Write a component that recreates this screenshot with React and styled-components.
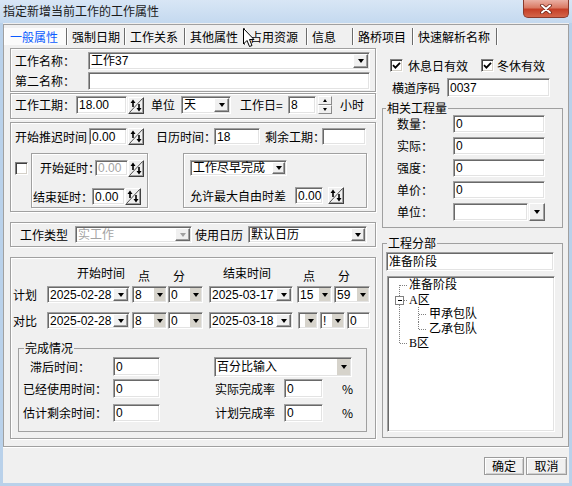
import React from "react";
import styled, { createGlobalStyle } from "styled-components";

const GlobalStyle = createGlobalStyle`
  html, body { margin: 0; padding: 0; background: #f0f0f0; }
  body {
    font-family: "Liberation Sans", "Noto Sans CJK SC", sans-serif;
    font-size: 12px;
    color: #000;
  }
  *, *::before, *::after { box-sizing: border-box; }
`;

const CJK = `"Noto Sans CJK SC", "Liberation Sans", sans-serif`;

const Window = styled.div`
  width: 572px;
  height: 486px;
  display: flex;
  flex-direction: column;
  background: #f0f0f0;
  overflow: hidden;
`;

const TitleBar = styled.div`
  height: 23px;
  flex: none;
  display: flex;
  align-items: flex-start;
  background: linear-gradient(to bottom, #d8e6f5 0%, #c4d9ef 100%);
`;

const Caption = styled.div`
  padding: 3px 0 0 3px;
  line-height: 16px;
  font-family: ${CJK};
  color: #1a1a1a;
`;

const CloseButton = styled.div`
  margin-left: auto;
  margin-right: 3px;
  width: 46px;
  height: 18px;
  border: 1px solid #8a3a2c;
  border-top: 0;
  border-radius: 0 0 5px 5px;
  background: linear-gradient(to bottom, #eab0a4 0%, #da7a64 45%, #c53f27 55%, #d4654a 100%);
  display: flex;
  align-items: center;
  justify-content: center;
`;

const Body = styled.div`
  flex: 1;
  display: flex;
  flex-direction: column;
  border: 3px solid #b9d1ea;
  border-top: 0;
  padding-top: 1px;
`;

const TabFrame = styled.div`
  height: 423px;
  flex: none;
  border: 1px solid #a0a0a0;
  display: flex;
  flex-direction: column;
  position: relative;
`;

const TabStrip = styled.div`
  height: 23px;
  flex: none;
  display: flex;
  align-items: center;
`;

const Tab = styled.div`
  width: ${(p) => p.$w}px;
  height: 17px;
  line-height: 17px;
  padding-left: 5px;
  flex: none;
  font-family: ${CJK};
  white-space: nowrap;
  border-right: 1px solid #6b6b6b;
  box-shadow: 1px 0 0 #fff;
  color: ${(p) => (p.$active ? "#0b5bff" : "#000")};
  background: ${(p) => (p.$active ? "#fbfbfb" : "transparent")};
  border-left: ${(p) => (p.$active ? "1px solid #fff" : "0")};
`;

const Cursor = styled.svg`
  position: absolute;
  left: 239px;
  top: 3px;
`;

const Page = styled.div`
  flex: 1;
  display: flex;
  padding-left: 6px;
`;

const LeftCol = styled.div`
  width: 366px;
  flex: none;
  display: flex;
  flex-direction: column;
`;

const RightCol = styled.div`
  width: 181px;
  margin-left: 6px;
  flex: none;
  display: flex;
  flex-direction: column;
`;

const Bevel = styled.div`
  flex: none;
  height: ${(p) => p.$h}px;
  width: ${(p) => (p.$w ? `${p.$w}px` : "auto")};
  margin-top: ${(p) => p.$mt || 0}px;
  margin-left: ${(p) => p.$ml || 0}px;
  padding: ${(p) => p.$pad || "0"};
  border: 1px solid #a0a0a0;
  box-shadow: inset 1px 1px #fff, 1px 1px #fff;
  display: flex;
  flex-direction: column;
`;

const Row = styled.div`
  flex: none;
  display: flex;
  align-items: center;
  height: ${(p) => p.$h || 18}px;
  margin-top: ${(p) => p.$mt || 0}px;
  padding-left: ${(p) => p.$pl || 0}px;
`;

const HeadRow = styled(Row)`
  align-items: flex-start;
`;

const Split = styled.div`
  flex: none;
  display: flex;
  align-items: flex-start;
  margin-top: 8px;
`;

const Label = styled.span`
  flex: none;
  width: ${(p) => (p.$w ? `${p.$w}px` : "auto")};
  margin-left: ${(p) => p.$ml || 0}px;
  padding-top: ${(p) => p.$dy || 0}px;
  line-height: 14px;
  white-space: nowrap;
  font-family: ${CJK};
`;

const Field = styled.div`
  flex: none;
  width: ${(p) => p.$w}px;
  height: ${(p) => p.$h || 18}px;
  margin-left: ${(p) => p.$ml || 0}px;
  margin-top: ${(p) => p.$mt || 0}px;
  display: flex;
  align-items: center;
  padding-left: 2px;
  overflow: hidden;
  white-space: nowrap;
  line-height: 14px;
  background: #fff;
  color: ${(p) => (p.$disabled ? "#a3a3a3" : "#000")};
  border: 1px solid;
  border-color: #a0a0a0 #fff #fff #a0a0a0;
  box-shadow: inset 1px 1px #696969, inset -1px -1px #e3e3e3;
`;

const FieldText = styled.span`
  flex: 1;
  overflow: hidden;
`;

const ArrowBtn = styled.div`
  flex: none;
  align-self: stretch;
  width: ${(p) => p.$w || 15}px;
  margin: 1px 1px 1px auto;
  display: flex;
  align-items: center;
  justify-content: center;
  background: ${(p) => (p.$tone === "tan" ? "#d6d3cb" : "#f0f0f0")};
  ${(p) =>
    p.$tone === "tan"
      ? ""
      : "border: 1px solid; border-color: #fff #696969 #696969 #fff; box-shadow: inset -1px -1px #a0a0a0;"}

  &::after {
    content: "";
    border-left: 3.5px solid transparent;
    border-right: 3.5px solid transparent;
    border-top: 4px solid ${(p) => (p.$tone === "disabled" ? "#a0a0a0" : "#000")};
  }
`;

const DropButton = styled(ArrowBtn)`
  align-self: auto;
  height: 18px;
  margin: 0 0 0 1px;
`;

const SpinBox = styled.div`
  flex: none;
  width: 16px;
  height: 17px;
  margin-left: ${(p) => (p.$ml === undefined ? 1 : p.$ml)}px;
  background: #f0f0f0;
  border: 1px solid;
  border-color: #fff #404040 #404040 #fff;
  box-shadow: inset -1px -1px #a0a0a0;
  display: flex;
`;

const UpDownWrap = styled.div`
  flex: none;
  width: 14px;
  height: 18px;
  margin-left: 2px;
  display: flex;
  flex-direction: column;
`;

const UpDownHalf = styled.div`
  flex: 1;
  background: #f0f0f0;
  border: 1px solid;
  border-color: #fff #8a8a8a #8a8a8a #fff;
  display: flex;
  align-items: center;
  justify-content: center;

  &::after {
    content: "";
    border-left: 2.5px solid transparent;
    border-right: 2.5px solid transparent;
    ${(p) => (p.$up ? "border-bottom: 3px solid #000;" : "border-top: 3px solid #000;")}
  }
`;

const CheckBox = styled.div`
  flex: none;
  width: 13px;
  height: 13px;
  margin-left: ${(p) => p.$ml || 0}px;
  margin-top: ${(p) => p.$mt || 0}px;
  background: #fff;
  border: 1px solid;
  border-color: #808080 #fff #fff #808080;
  box-shadow: inset 1px 1px #404040, inset -1px -1px #d4d0c8;
  display: flex;
  align-items: center;
  justify-content: center;
`;

const Group = styled.fieldset`
  flex: none;
  margin: ${(p) => p.$mt || 0}px 0 0 ${(p) => p.$ml || 0}px;
  padding: 0;
  min-width: 0;
  width: ${(p) => p.$w}px;
  height: ${(p) => p.$h}px;
  border: 1px solid #a0a0a0;
  display: flex;
  flex-direction: column;
`;

const GroupTitle = styled.legend`
  margin-left: ${(p) => (p.$ml === undefined ? 3 : p.$ml)}px;
  padding: 0 1px;
  line-height: 14px;
  font-family: ${CJK};
`;

const Tree = styled.div`
  flex: none;
  width: 168px;
  height: 156px;
  margin: 5px 0 0 4px;
  padding: 1px 0 0 1px;
  background: #fff;
  border: 1px solid;
  border-color: #a0a0a0 #fff #fff #a0a0a0;
  box-shadow: inset 1px 1px #696969, inset -1px -1px #e3e3e3;
  display: flex;
  flex-direction: column;
`;

const TreeRow = styled.div`
  flex: none;
  height: 14.5px;
  display: flex;
  align-items: center;
  line-height: 14px;
  font-family: "Liberation Serif", "Noto Sans CJK SC", serif;
`;

const Footer = styled.div`
  flex: 1;
  display: flex;
  justify-content: flex-end;
  align-items: flex-start;
  gap: 2px;
  padding: 10px 2px 0 0;
  box-shadow: inset 0 1px #fff;
`;

const Button = styled.div`
  width: ${(p) => p.$w}px;
  height: 18px;
  display: flex;
  align-items: center;
  justify-content: center;
  line-height: 14px;
  font-family: ${CJK};
  background: #f0f0f0;
  border: 1px solid #9c9c9c;
  box-shadow: inset 1px 1px #fff, inset -1px -1px #cfcfcf;
`;

const Combo = ({ w, h = 18, ml, text, tone = "raised", arrowW, disabled }) => (
  <Field $w={w} $h={h} $ml={ml} $disabled={disabled}>
    <FieldText>{text}</FieldText>
    <ArrowBtn $tone={disabled ? "disabled" : tone} $w={arrowW} />
  </Field>
);

const ArrowSpin = ({ ml }) => (
  <SpinBox $ml={ml}>
    <svg width="14" height="15" viewBox="0 0 14 15">
      <path d="M13.5 0.5 L0.5 14.5" stroke="#505050" strokeWidth="1" />
      <path d="M4 4v5" stroke="#000" strokeWidth="1.6" />
      <path d="M1.5 5 L4 1.5 L6.5 5 Z" fill="#000" />
      <path d="M10 6v5" stroke="#000" strokeWidth="1.6" />
      <path d="M7.5 10 L10 13.5 L12.5 10 Z" fill="#000" />
    </svg>
  </SpinBox>
);

const UpDown = () => (
  <UpDownWrap>
    <UpDownHalf $up />
    <UpDownHalf />
  </UpDownWrap>
);

const Check = ({ checked, ml, mt }) => (
  <CheckBox $ml={ml} $mt={mt}>
    {checked && (
      <svg width="9" height="9" viewBox="0 0 9 9">
        <path d="M1 4.2 L3.4 6.6 L8 1.8" stroke="#000" strokeWidth="1.8" fill="none" />
      </svg>
    )}
  </CheckBox>
);

const RH = 14.5;

const TreeGuide = ({ level, v0, v1, box }) => {
  const w = level === 0 ? 20 : 40;
  const c = RH / 2;
  const seg = (x, kind) => (
    <line x1={x} x2={x} y1={kind === "bottom" ? c : 0} y2={kind === "top" ? c : RH} />
  );
  const hx = level === 0 ? 10.5 : 29.5;
  return (
    <svg width={w} height={RH} viewBox={`0 0 ${w} ${RH}`}>
      <g stroke="#808080" strokeDasharray="1 1" shapeRendering="crispEdges">
        {v0 && seg(10.5, v0)}
        {v1 && seg(29.5, v1)}
        <line x1={hx} x2={hx + 8} y1={c} y2={c} />
      </g>
      {box && (
        <g shapeRendering="crispEdges">
          <rect x="6.5" y={c - 4} width="8" height="8" fill="#fff" stroke="#808080" />
          <line x1="8.5" x2="12.5" y1={c} y2={c} stroke="#000" />
        </g>
      )}
    </svg>
  );
};

const tabs = [
  { label: "一般属性", w: 63, active: true },
  { label: "强制日期", w: 58 },
  { label: "工作关系", w: 60 },
  { label: "其他属性", w: 60 },
  { label: "占用资源", w: 62 },
  { label: "信息", w: 46 },
  { label: "路桥项目", w: 60 },
  { label: "快速解析名称", w: 84 },
];

const quantities = ["数量：", "实际：", "强度：", "单价："];

const treeRows = [
  { text: "准备阶段", level: 0, v0: "bottom" },
  { text: "A区", level: 0, v0: "full", box: true },
  { text: "甲承包队", level: 1, v0: "full", v1: "full" },
  { text: "乙承包队", level: 1, v0: "full", v1: "top" },
  { text: "B区", level: 0, v0: "top" },
];

export default function App() {
  return (
    <>
      <GlobalStyle />
      <Window>
        <TitleBar>
          <Caption>指定新增当前工作的工作属性</Caption>
          <CloseButton>
            <svg width="12" height="10" viewBox="0 0 12 10">
              <path d="M2 1.5 L10 8.5 M10 1.5 L2 8.5" stroke="#6a2115" strokeWidth="3.6" strokeLinecap="round" />
              <path d="M2 1.5 L10 8.5 M10 1.5 L2 8.5" stroke="#fff" strokeWidth="2" strokeLinecap="round" />
            </svg>
          </CloseButton>
        </TitleBar>

        <Body>
          <TabFrame>
            <TabStrip>
              {tabs.map((t) => (
                <Tab key={t.label} $w={t.w} $active={t.active}>
                  {t.label}
                </Tab>
              ))}
            </TabStrip>
            <Cursor width="12" height="20" viewBox="0 0 12 20">
              <path
                d="M0.5 0.5 L0.5 16 L4 12.5 L6.5 18.5 L9 17.5 L6.5 11.5 L11 11.5 Z"
                fill="#fff"
                stroke="#000"
                strokeWidth="1"
                strokeLinejoin="miter"
              />
            </Cursor>

            <Page>
              <LeftCol>
                <Bevel $h={44} $pad="3px 4px 0 4px">
                  <Row>
                    <Label $w={73}>工作名称：</Label>
                    <Combo w={282} text="工作37" />
                  </Row>
                  <Row $mt={2}>
                    <Label $w={73}>第二名称：</Label>
                    <Field $w={282} />
                  </Row>
                </Bevel>

                <Bevel $h={26} $mt={1} $pad="2px 0 0 4px">
                  <Row>
                    <Label $w={61}>工作工期：</Label>
                    <Field $w={51}>18.00</Field>
                    <ArrowSpin />
                    <Label $w={30} $ml={7}>单位</Label>
                    <Combo w={50} text="天" />
                    <Label $w={48} $ml={9}>工作日=</Label>
                    <Field $w={28}>8</Field>
                    <UpDown />
                    <Label $ml={8}>小时</Label>
                  </Row>
                </Bevel>

                <Bevel $h={90} $mt={3} $pad="5px 0 0 4px">
                  <Row $h={17}>
                    <Label $w={74}>开始推迟时间</Label>
                    <Field $w={38} $h={17}>0.00</Field>
                    <ArrowSpin />
                    <Label $w={58} $ml={12}>日历时间：</Label>
                    <Field $w={46} $h={17}>18</Field>
                    <Label $w={57} $ml={5}>剩余工期：</Label>
                    <Field $w={44} $h={17} />
                  </Row>
                  <Split>
                    <Check mt={9} />
                    <Bevel $w={117} $h={55} $ml={3} $pad="6px 0 0 0">
                      <Row $h={16} $pl={8}>
                        <Label $w={55}>开始延时：</Label>
                        <Field $w={33} $h={16} $disabled>0.00</Field>
                        <ArrowSpin ml={0} />
                      </Row>
                      <Row $h={17} $mt={12} $pl={1}>
                        <Label $w={59}>结束延时：</Label>
                        <Field $w={33} $h={17}>0.00</Field>
                        <ArrowSpin ml={0} />
                      </Row>
                    </Bevel>
                    <Bevel $w={184} $h={55} $ml={35} $pad="6px 0 0 6px">
                      <Row $h={16}>
                        <Combo w={97} h={16} arrowW={13} text="工作尽早完成" />
                      </Row>
                      <Row $h={17} $mt={11}>
                        <Label $w={105}>允许最大自由时差</Label>
                        <Field $w={28} $h={17}>0.00</Field>
                        <ArrowSpin ml={5} />
                      </Row>
                    </Bevel>
                  </Split>
                </Bevel>

                <Bevel $h={25} $mt={10} $pad="3px 0 0 9px">
                  <Row $h={17}>
                    <Label $w={55}>工作类型</Label>
                    <Combo w={117} h={17} text="实工作" disabled />
                    <Label $w={53} $ml={3}>使用日历</Label>
                    <Combo w={119} h={17} arrowW={14} text="默认日历" />
                  </Row>
                </Bevel>

                <Bevel $h={182} $mt={10} $pad="8px 0 0 0">
                  <HeadRow $h={14}>
                    <Label $ml={66} $w={48}>开始时间</Label>
                    <Label $ml={13} $w={12} $dy={3}>点</Label>
                    <Label $ml={23} $w={12} $dy={3}>分</Label>
                    <Label $ml={38} $w={48}>结束时间</Label>
                    <Label $ml={32} $w={12} $dy={3}>点</Label>
                    <Label $ml={23} $w={12} $dy={3}>分</Label>
                  </HeadRow>
                  <Row $h={17} $mt={6}>
                    <Label $w={34} $ml={2}>计划</Label>
                    <Combo w={83} h={17} text="2025-02-28" />
                    <Combo w={35} h={17} ml={2} text="8" tone="tan" arrowW={11} />
                    <Combo w={35} h={17} ml={1} text="0" tone="tan" arrowW={11} />
                    <Combo w={84} h={17} ml={6} text="2025-03-17" />
                    <Combo w={35} h={17} ml={4} text="15" tone="tan" arrowW={11} />
                    <Combo w={36} h={17} ml={2} text="59" tone="tan" arrowW={11} />
                  </Row>
                  <Row $h={17} $mt={9}>
                    <Label $w={34} $ml={2}>对比</Label>
                    <Combo w={83} h={17} text="2025-02-28" />
                    <Combo w={35} h={17} ml={2} text="8" tone="tan" arrowW={11} />
                    <Combo w={35} h={17} ml={1} text="0" tone="tan" arrowW={11} />
                    <Combo w={84} h={17} ml={6} text="2025-03-18" />
                    <Combo w={20} h={17} ml={5} text="" tone="tan" arrowW={11} />
                    <Combo w={25} h={17} ml={2} text="!" tone="tan" arrowW={11} />
                    <Field $w={23} $h={17} $ml={2}>0</Field>
                  </Row>

                  <Group $w={349} $h={91} $mt={12} $ml={7}>
                    <GroupTitle $ml={5}>完成情况</GroupTitle>
                    <Row $h={19} $mt={2} $pl={11}>
                      <Label $w={83}>滞后时间：</Label>
                      <Field $w={47} $h={19}>0</Field>
                      <Combo w={138} h={20} ml={54} text="百分比输入" tone="tan" arrowW={13} />
                    </Row>
                    <Row $h={19} $mt={3} $pl={4}>
                      <Label $w={90}>已经使用时间：</Label>
                      <Field $w={47} $h={19}>0</Field>
                      <Label $w={69} $ml={55}>实际完成率</Label>
                      <Field $w={39} $h={19}>0</Field>
                      <Label $ml={19}>%</Label>
                    </Row>
                    <Row $h={18} $mt={6} $pl={4}>
                      <Label $w={90}>估计剩余时间：</Label>
                      <Field $w={47} $h={18}>0</Field>
                      <Label $w={69} $ml={55}>计划完成率</Label>
                      <Field $w={39} $h={18}>0</Field>
                      <Label $ml={19}>%</Label>
                    </Row>
                  </Group>
                </Bevel>
              </LeftCol>

              <RightCol>
                <Row $h={13} $mt={11}>
                  <Check ml={8} checked />
                  <Label $ml={5} $w={60}>休息日有效</Label>
                  <Check ml={13} checked />
                  <Label $ml={3}>冬休有效</Label>
                </Row>
                <Row $h={19} $mt={6}>
                  <Label $ml={10} $w={55}>横道序码</Label>
                  <Field $w={103} $h={19}>0037</Field>
                </Row>

                <Group $w={181} $h={127} $mt={4}>
                  <GroupTitle>相关工程量</GroupTitle>
                  {quantities.map((q, i) => (
                    <Row key={q} $mt={i === 0 ? 0 : 4} $pl={14}>
                      <Label $w={56}>{q}</Label>
                      <Field $w={92}>0</Field>
                    </Row>
                  ))}
                  <Row $mt={4} $pl={14}>
                    <Label $w={56}>单位：</Label>
                    <Field $w={75} />
                    <DropButton $w={16} />
                  </Row>
                </Group>

                <Group $w={181} $h={202} $mt={8}>
                  <GroupTitle $ml={4}>工程分部</GroupTitle>
                  <Field $w={168} $h={19} $ml={3} $mt={2}>准备阶段</Field>
                  <Tree>
                    {treeRows.map((r) => (
                      <TreeRow key={r.text}>
                        <TreeGuide level={r.level} v0={r.v0} v1={r.v1} box={r.box} />
                        <span>{r.text}</span>
                      </TreeRow>
                    ))}
                  </Tree>
                </Group>
              </RightCol>
            </Page>
          </TabFrame>

          <Footer>
            <Button $w={40}>确定</Button>
            <Button $w={41}>取消</Button>
          </Footer>
        </Body>
      </Window>
    </>
  );
}
